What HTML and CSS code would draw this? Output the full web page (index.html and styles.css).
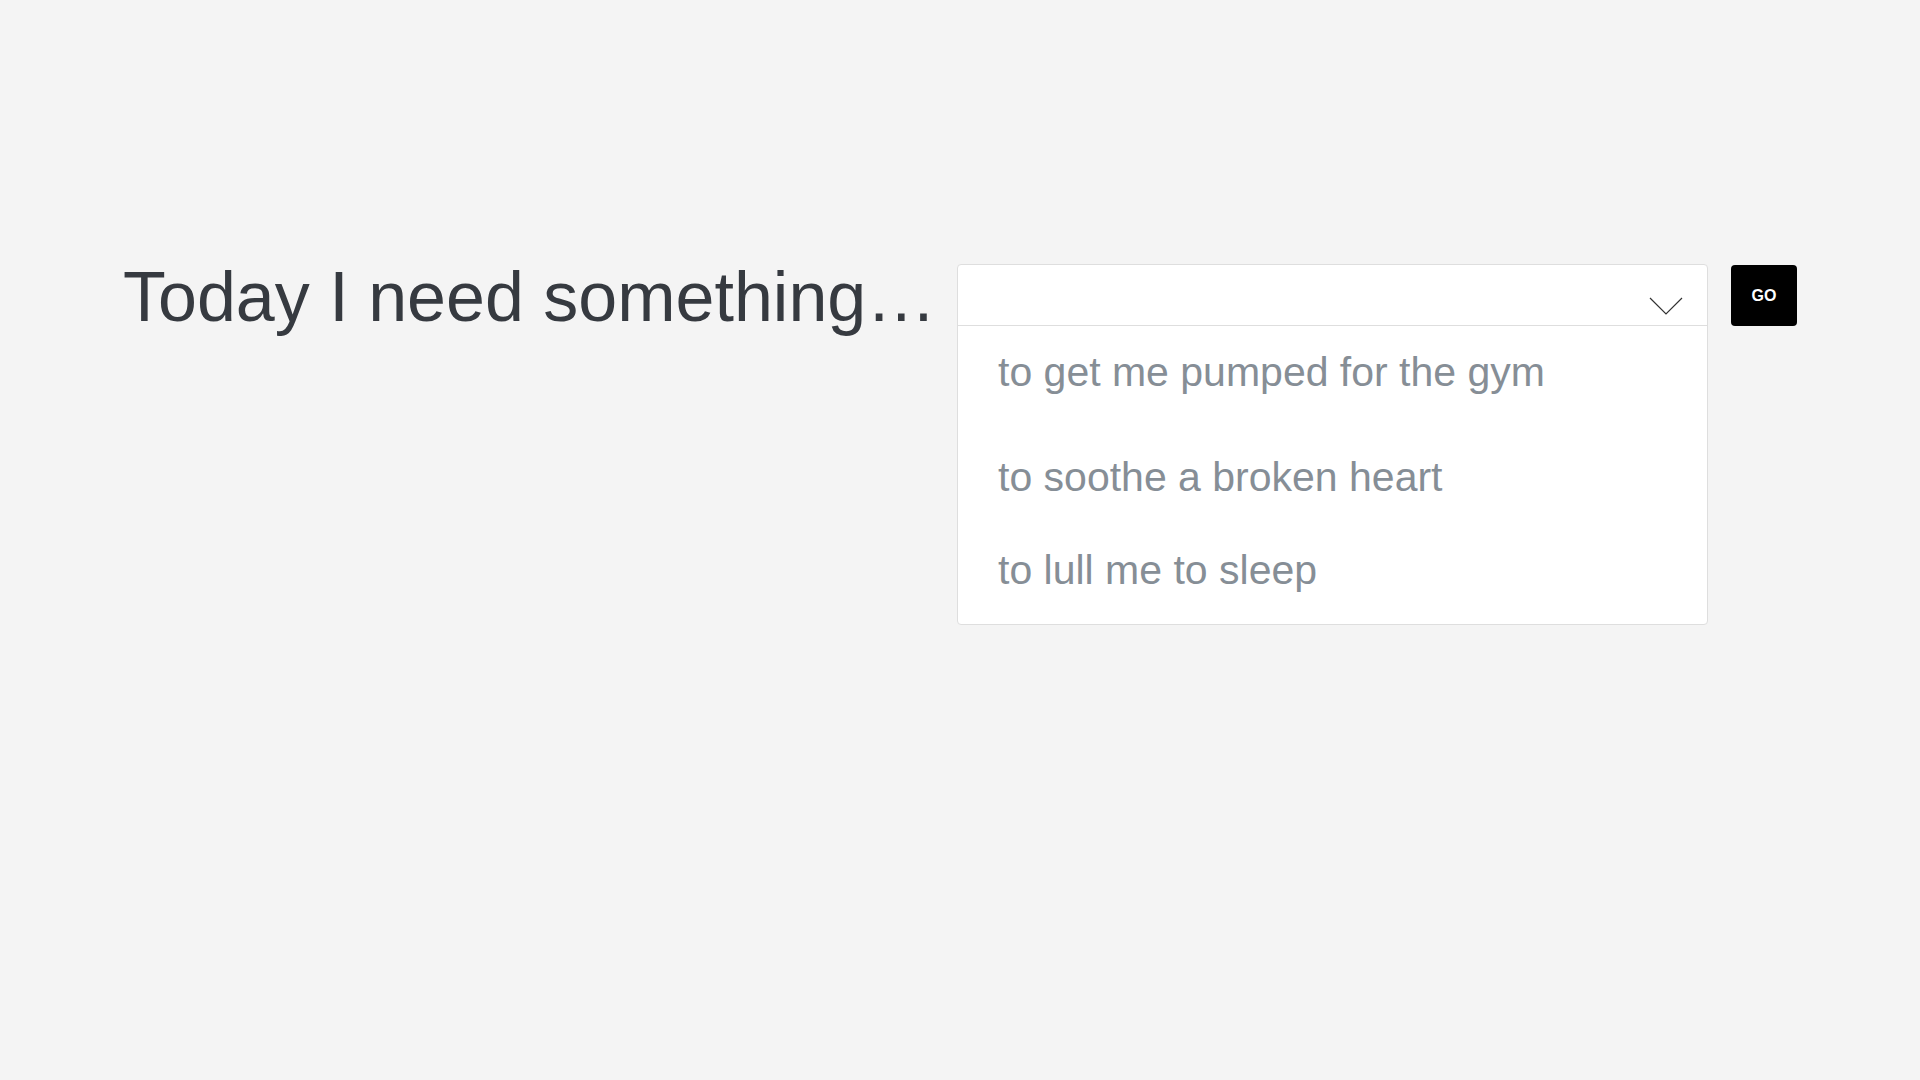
FILE: index.html
```html
<!DOCTYPE html>
<html lang="en">
<head>
<meta charset="utf-8">
<title>Today I need something…</title>
<link rel="stylesheet" href="styles.css">
</head>
<body>
<main class="page">
  <div class="picker-row">
    <h1 class="headline">Today I need something…</h1>
    <div class="select">
      <div class="select-head">
        <svg class="chevron" width="34" height="18" viewBox="0 0 34 18" aria-hidden="true">
          <polyline points="1,1 17,17 33,1" fill="none" stroke="#333" stroke-width="1.2"/>
        </svg>
      </div>
      <ul class="option-list">
        <li class="option option--first">to get me pumped for the gym</li>
        <li class="option">to soothe a broken heart</li>
        <li class="option">to lull me to sleep</li>
      </ul>
    </div>
    <button class="go-btn" type="button">GO</button>
  </div>
</main>
</body>
</html>
```

FILE: styles.css
```css
html, body {
  margin: 0;
  padding: 0;
}

body {
  background: #f4f4f4;
  font-family: "Liberation Sans", Arial, Helvetica, sans-serif;
  min-height: 1080px;
}

.page {
  padding-top: 264px;
}

.picker-row {
  width: 1674px;
  margin: 0 auto;
  display: flex;
  align-items: flex-start;
}

.headline {
  flex: 1;
  margin: -2px 0 0 0;
  font-size: 70px;
  line-height: 1;
  font-weight: 400;
  color: #363a40;
  white-space: nowrap;
}

.select {
  width: 751px;
  box-sizing: border-box;
  background: #fff;
  border: 1px solid #dedede;
  border-radius: 4px;
}

.select-head {
  height: 60px;
  border-bottom: 1px solid #dedede;
  display: flex;
  justify-content: flex-end;
  align-items: flex-start;
  padding-right: 24px;
}

.chevron {
  margin-top: 32px;
  display: block;
}

.option-list {
  list-style: none;
  margin: 0;
  padding: 22px 40px 30px 40px;
}

.option {
  font-size: 41px;
  line-height: 48px;
  color: #868e96;
  white-space: nowrap;
}

.option + .option {
  margin-top: 45px;
}

.option--first {
  padding-bottom: 12px;
}

.go-btn {
  margin-left: 23px;
  margin-top: 1px;
  width: 66px;
  height: 61px;
  border: none;
  border-radius: 4px;
  background: #000;
  color: #fff;
  font-family: "Liberation Sans", Arial, sans-serif;
  font-weight: 700;
  font-size: 16px;
  padding: 0;
  cursor: pointer;
}
```
